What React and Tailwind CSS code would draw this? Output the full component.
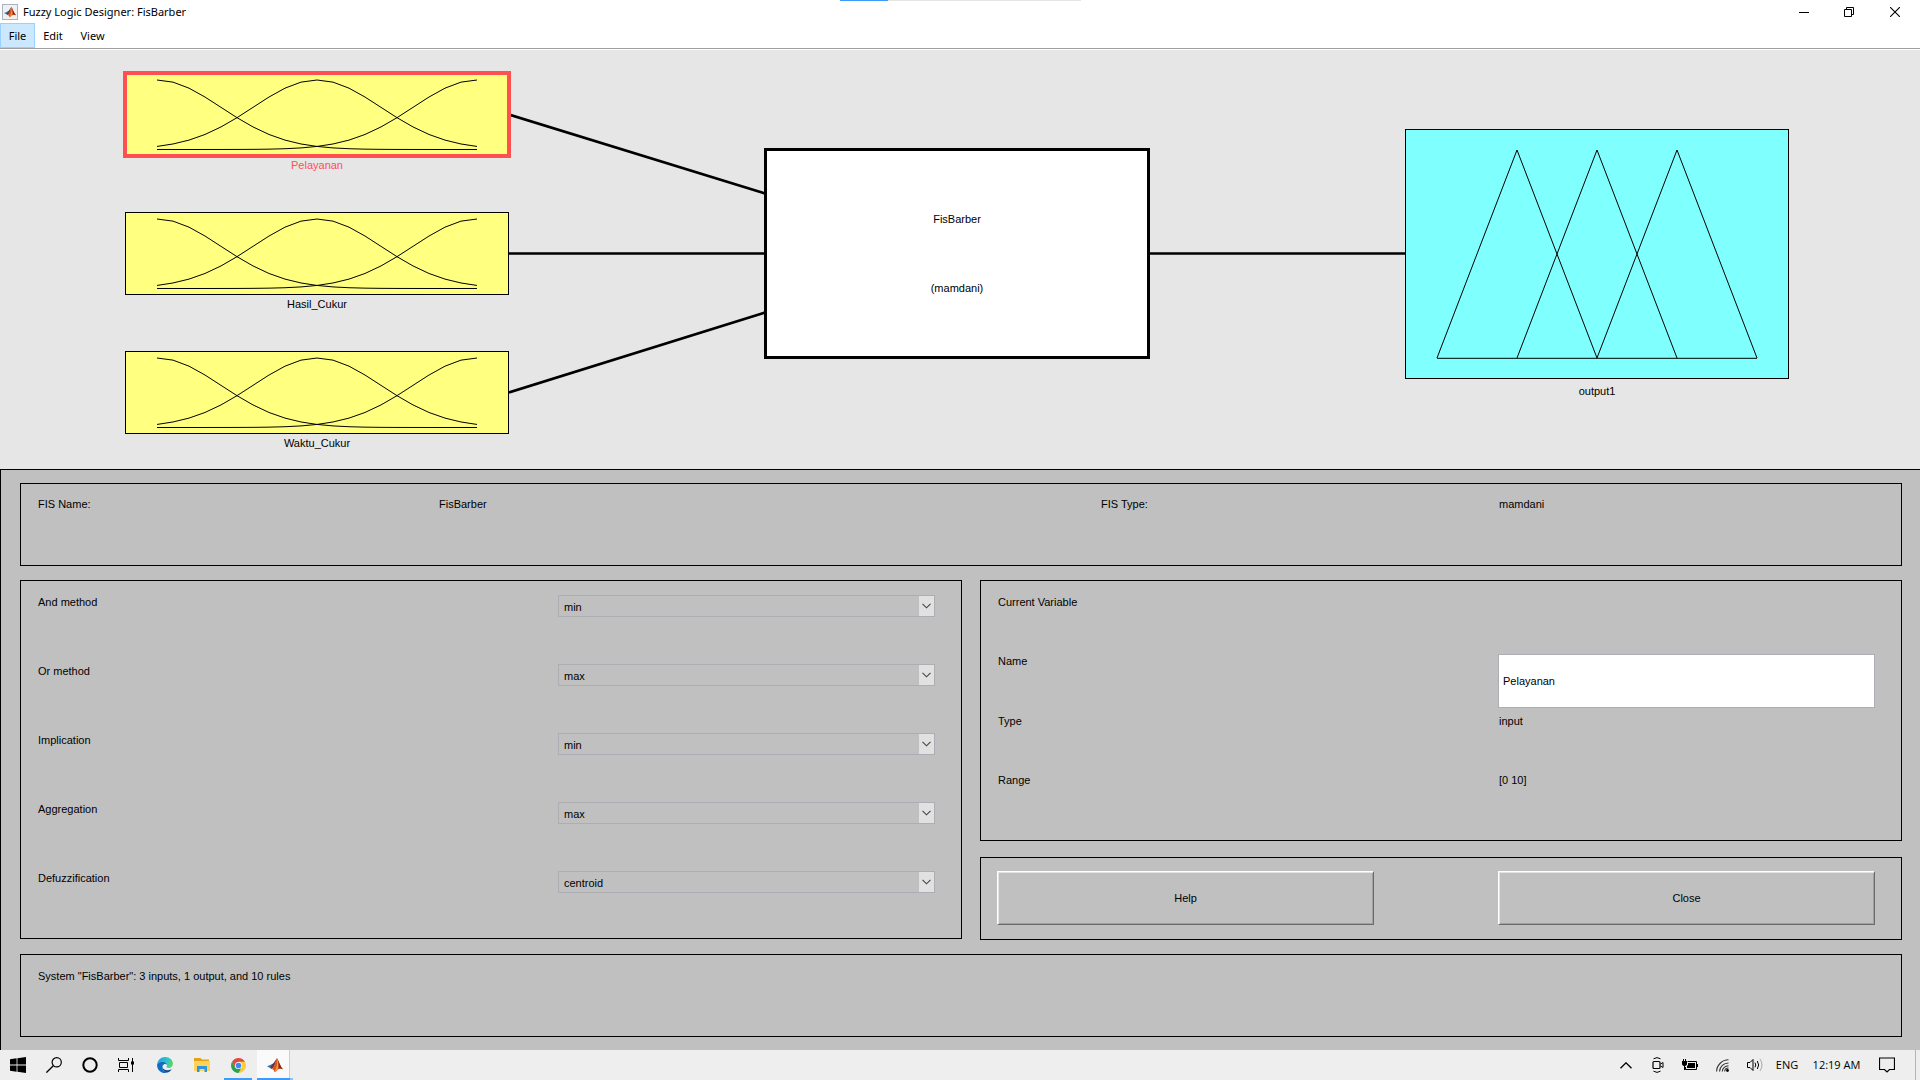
import React from "react";

const gauss = (c) =>
  Array.from({ length: 21 }, (_, i) => {
    const t = i / 20;
    const v = Math.exp(-((t - c) ** 2) / (2 * 0.2 * 0.2));
    return `${32 + t * 320},${76.5 - v * 69.5}`;
  }).join(" ");

const curves = [gauss(0), gauss(0.5), gauss(1)];

function InputNode({ name, selected }) {
  return (
    <div className="h-[139px]">
      <button
        type="button"
        aria-label={name}
        className={
          selected
            ? "relative z-10 block h-[83px] w-full bg-[#ffff80] outline-4 -outline-offset-2 outline-[#ff5050]"
            : "relative z-10 block h-[83px] w-full bg-[#ffff80] outline -outline-offset-1 outline-black"
        }
      >
        <svg viewBox="0 0 384 83" preserveAspectRatio="none" className="block h-full w-full">
          {curves.map((p) => (
            <polyline key={p} points={p} fill="none" stroke="#000" strokeWidth="1" />
          ))}
        </svg>
      </button>
      <div className={selected ? "mt-px text-center leading-4 text-[#ff5050]" : "mt-px text-center leading-4"}>
        {name}
      </div>
    </div>
  );
}

function Diagram() {
  return (
    <section className="grid h-[419px] grid-cols-[125fr_384fr_256fr_384fr_256fr_384fr_131fr] bg-[#e6e6e6] text-[11px]">
      <div />
      <div className="pt-[23px]">
        <InputNode name="Pelayanan" selected />
        <InputNode name="Hasil_Cukur" />
        <InputNode name="Waktu_Cukur" />
      </div>
      <svg viewBox="0 0 256 419" preserveAspectRatio="none" className="h-[419px] w-full">
        <path d="M0 64.5 256 143.5M0 203.5H256M0 342.5 256 262.5" fill="none" stroke="#000" strokeWidth="2.7" />
      </svg>
      <button
        type="button"
        className="-mx-px mt-[98px] flex h-[211px] flex-col items-center justify-center gap-[53px] border-3 border-black bg-white leading-4"
      >
        <span>FisBarber</span>
        <span>(mamdani)</span>
      </button>
      <svg viewBox="0 0 256 419" preserveAspectRatio="none" className="h-[419px] w-full">
        <path d="M0 203.5H256" stroke="#000" strokeWidth="2.7" />
      </svg>
      <div className="pt-[79px]">
        <button type="button" aria-label="output1" className="block h-[250px] w-full bg-[#80ffff] outline -outline-offset-1 outline-black">
          <svg viewBox="0 0 384 250" preserveAspectRatio="none" className="block h-full w-full">
            <path
              d="M32 229 112 21 192 229M112 229 192 21 272 229M192 229 272 21 352 229M32 229.3H352"
              fill="none"
              stroke="#000"
              strokeWidth="1"
            />
          </svg>
        </button>
        <div className="mt-1 text-center leading-4">output1</div>
      </div>
      <div />
    </section>
  );
}

const methods = [
  ["And method", "min"],
  ["Or method", "max"],
  ["Implication", "min"],
  ["Aggregation", "max"],
  ["Defuzzification", "centroid"],
];

function MethodRow({ label, value }) {
  const id = label.replace(" ", "-").toLowerCase();
  return (
    <div className="grid h-[69px] grid-cols-[520fr_377fr] items-start last:h-10">
      <label htmlFor={id} className="leading-4">
        {label}
      </label>
      <div className="relative mt-px">
        <select
          id={id}
          defaultValue={value}
          className="block h-[22px] w-full appearance-none border border-[#adadb3] bg-transparent pt-0.5 pl-[5px] text-black"
        >
          <option>{value}</option>
        </select>
        <span className="pointer-events-none absolute inset-y-px right-px flex w-[15px] items-center justify-center bg-[#e1e1e1] pr-px">
          <svg width="9" height="6" viewBox="0 0 9 6">
            <path d="M.5.8 4.5 4.8 8.5.8" fill="none" stroke="#444" strokeWidth="1.1" />
          </svg>
        </span>
      </div>
    </div>
  );
}

function BevelButton({ children }) {
  return (
    <button
      type="button"
      className="h-[54px] border border-t-white border-r-[#6b6b6b] border-b-[#6b6b6b] border-l-white bg-[#c0c0c0] text-center shadow-[inset_1px_1px_0_#e3e3e3,inset_-1px_-1px_0_#a0a0a0]"
    >
      {children}
    </button>
  );
}

function Controls() {
  return (
    <main className="flex flex-1 flex-col gap-3.5 border-t border-l border-black bg-[#c0c0c0] pt-[13px] pr-[18px] pb-[13px] pl-[19px] text-[11px]">
      <section className="grid h-[83px] grid-cols-[401fr_662fr_398fr_402fr] border border-black pt-3 pl-[17px] leading-4">
        <span>FIS Name:</span>
        <span>FisBarber</span>
        <span>FIS Type:</span>
        <span>mamdani</span>
      </section>
      <div className="grid flex-1 grid-cols-[942fr_922fr] gap-[18px]">
        <section className="mb-px border border-black pt-[13px] pr-[26px] pl-[17px]">
          {methods.map(([label, value]) => (
            <MethodRow key={label} label={label} value={value} />
          ))}
        </section>
        <div className="flex flex-col gap-4">
          <section className="flex-1 border border-black pt-[13px] pr-[26px] pl-[17px] leading-4">
            <h2>Current Variable</h2>
            <div className="mt-[43px] grid h-[60px] grid-cols-[500fr_377fr] items-start">
              <label htmlFor="var-name">Name</label>
              <input
                id="var-name"
                defaultValue="Pelayanan"
                className="mt-px h-[54px] w-full border border-[#adadb3] bg-white px-1 text-black"
              />
            </div>
            <div className="grid h-[59px] grid-cols-[500fr_377fr]">
              <span>Type</span>
              <span className="pl-px">input</span>
            </div>
            <div className="grid grid-cols-[500fr_377fr]">
              <span>Range</span>
              <span className="pl-px">[0 10]</span>
            </div>
          </section>
          <section className="grid h-[83px] grid-cols-2 gap-[124px] border border-black pt-[13px] pr-[26px] pl-4">
            <BevelButton>Help</BevelButton>
            <BevelButton>Close</BevelButton>
          </section>
        </div>
      </div>
      <section className="h-[83px] border border-black pt-[13px] pl-[17px] leading-4">
        System "FisBarber": 3 inputs, 1 output, and 10 rules
      </section>
    </main>
  );
}

function MatlabMark({ className }) {
  return (
    <svg viewBox="0 0 16 16" className={className}>
      <path d="M0 9.3 5 7.2 7.2 9 4.6 12z" fill="#3f74a8" />
      <path d="M5 7.2C7 6.6 8 3.4 10 1L7.4 9.2 4.6 12 3.8 10z" fill="#5b3a4c" />
      <path d="M4.6 12C7 11.4 8.4 5 10 1c1.6 2.8 3.2 8.2 6 11.4-2.3-1.2-3.6-1-5.3.3C9.6 13.6 8.8 15 7.5 15 7 13.3 6 12 4.6 12z" fill="#d9541e" />
      <path d="M10 1c.6 3.6.4 8-2.5 14 1.3 0 2.1-1.4 3.2-2.3C12 9.2 11.4 4 10 1z" fill="#f29a3c" />
      <path d="M10 1c1.6 2.8 3.2 8.2 6 11.4-2-1.1-3.2-1.1-4.4-.5C12 8 11.4 4 10 1z" fill="#8e2415" />
    </svg>
  );
}

function TitleBar() {
  return (
    <header className="relative bg-white">
      <div className="absolute top-0 left-[840px] flex h-px w-[241px] bg-[#e5e5e5]">
        <div className="w-12 bg-[#3f9bf7]" />
      </div>
      <div className="flex h-[23px] items-center">
        <span className="ml-0.5 flex h-4 w-4 items-center justify-center border border-[#a9b4c0] bg-[#eef0f2]">
          <MatlabMark className="h-3 w-3" />
        </span>
        <h1 className="ml-[5px] pt-px text-[11px]">Fuzzy Logic Designer: FisBarber</h1>
        <div className="ml-auto flex h-full">
          <button type="button" aria-label="Minimize" className="flex w-[45px] items-center justify-center">
            <svg width="10" height="10" viewBox="0 0 10 10">
              <path d="M0 5.5H10" stroke="#000" />
            </svg>
          </button>
          <button type="button" aria-label="Restore" className="flex w-[46px] items-center justify-center">
            <svg width="10" height="10" viewBox="0 0 10 10">
              <path d="M.5 2.5H7.5V9.5H.5zM2.5 2.5V.5H9.5V7.5H7.5" fill="none" stroke="#000" />
            </svg>
          </button>
          <button type="button" aria-label="Close window" className="mr-0.5 flex w-[46px] items-center justify-center">
            <svg width="10" height="10" viewBox="0 0 10 10">
              <path d="M0 0 10 10M10 0 0 10" stroke="#000" strokeWidth="1.1" />
            </svg>
          </button>
        </div>
      </div>
      <nav className="flex h-[25px] text-[11px]">
        <button type="button" className="w-[35px] border border-[#99d1ff] bg-[#cce8ff] pt-0.5">
          File
        </button>
        <button type="button" className="w-9 pt-0.5">
          Edit
        </button>
        <button type="button" className="w-[43px] pt-0.5">
          View
        </button>
      </nav>
      <div className="h-0.5 border-t border-[#a0a0a0]" />
    </header>
  );
}

const slot = "flex h-full items-center justify-center";

function Taskbar() {
  return (
    <footer className="flex h-[30px] items-center bg-[#eeeeee] text-[11px]">
      <button type="button" aria-label="Start" className={`${slot} w-9`}>
        <svg width="16" height="16" viewBox="0 0 16 16">
          <path d="M0 2.2 6.6 1.3V7.6H0zM7.4 1.2 16 0V7.6H7.4zM0 8.4H6.6V14.7L0 13.8zM7.4 8.4H16V16L7.4 14.8z" />
        </svg>
      </button>
      <button type="button" aria-label="Search" className={`${slot} w-9`}>
        <svg width="16" height="16" viewBox="0 0 16 16">
          <circle cx="10.7" cy="5.3" r="4.6" fill="none" stroke="#000" strokeWidth="1.2" />
          <path d="M7.3 8.7.4 15.6" stroke="#000" strokeWidth="1.3" />
        </svg>
      </button>
      <button type="button" aria-label="Cortana" className={`${slot} w-9`}>
        <svg width="16" height="16" viewBox="0 0 16 16">
          <circle cx="8" cy="8" r="6.7" fill="none" stroke="#000" strokeWidth="2" />
        </svg>
      </button>
      <button type="button" aria-label="Task View" className={`${slot} w-9`}>
        <svg width="16" height="16" viewBox="0 0 16 16" fill="none" stroke="#000">
          <path d="M.5 1V3.5H10.5V1M.5 15V12.5H10.5V15M1.5 5.5H9.5V10.5H1.5zM14.5 1V15" />
          <path d="M13 4.5H16V7.5H13z" fill="#000" stroke="none" />
        </svg>
      </button>
      <button type="button" aria-label="Microsoft Edge" className={`${slot} ml-[3px] w-9`}>
        <svg width="16" height="16" viewBox="0 0 16 16">
          <defs>
            <linearGradient id="edge-top" x1="0" x2="1" y1=".3" y2=".6">
              <stop offset="0" stopColor="#1f9fe0" />
              <stop offset=".6" stopColor="#2fc3c8" />
              <stop offset="1" stopColor="#63d957" />
            </linearGradient>
          </defs>
          <path d="M.1 7.5C.6 3 4 0 8 0c4.7 0 8 3.2 8 6.8 0 2.6-2 4.2-4.3 4.2-1.7 0-2.5-.8-2.2-1.4.5-.6.6-1.1.5-1.7C9.7 5.8 7.8 4.7 5.6 4.7 3.1 4.7.9 5.9.1 7.5z" fill="url(#edge-top)" />
          <path d="M.1 7.5C.9 5.9 3.1 4.7 5.6 4.7c2.2 0 4.1 1.1 4.4 3.2C9 6.5 6.7 6.7 5.7 8.6c-1.3 2.7.7 6.7 5 7-1 .3-1.8.4-2.7.4C3.5 16-.3 12.3.1 7.5z" fill="#0f6cc4" />
          <path d="M5.7 8.6C4.8 11.5 8 15 14.7 12.3c-.9 1.5-2.3 2.7-4 3.3-4.3-.3-6.3-4.3-5-7z" fill="#134a96" />
        </svg>
      </button>
      <button type="button" aria-label="File Explorer" className={`${slot} w-[37px]`}>
        <svg width="16" height="14" viewBox="0 0 16 14">
          <path d="M0 0H6.5L8 1.5H15V4H0z" fill="#e3a21a" />
          <path d="M0 3H16V13H0z" fill="#ffd35a" />
          <path d="M3 14V8H13V14H10.5V11H5.5V14z" fill="#3096dc" />
        </svg>
      </button>
      <button type="button" aria-label="Google Chrome" className={`${slot} relative w-9`}>
        <svg width="15" height="15" viewBox="0 0 16 16">
          <path d="M8 4H14.9A8 8 0 0 1 8 16L11.5 10z" fill="#fbcd3c" />
          <path d="M1.1 4A8 8 0 0 1 14.9 4H8L4.5 10z" fill="#e04a3a" />
          <path d="M1.1 4 4.5 10H11.5L8 16A8 8 0 0 1 1.1 4z" fill="#2ba24c" />
          <circle cx="8" cy="8" r="3.8" fill="#fff" />
          <circle cx="8" cy="8" r="3" fill="#4285f4" />
        </svg>
        <span className="absolute bottom-0 left-1 h-0.5 w-7 bg-[#3f9bf7]" />
      </button>
      <button type="button" aria-label="MATLAB" className={`${slot} relative ml-px w-9 bg-[#fafafa]`}>
        <MatlabMark className="h-4 w-4" />
        <span className="absolute inset-y-0 right-0 w-1 border-l border-[#d0d0d0] bg-[#eeeeee]" />
        <span className="absolute inset-x-0 bottom-0 h-0.5 border-r-3 border-[#8cc2f8] bg-[#3f9bf7]" />
      </button>

      <div className="ml-auto flex h-full items-center">
        <button type="button" aria-label="Show hidden icons" className={`${slot} w-[31px]`}>
          <svg width="12" height="7" viewBox="0 0 12 7">
            <path d="M.5 6.3 6 .8 11.5 6.3" fill="none" stroke="#000" strokeWidth="1.3" />
          </svg>
        </button>
        <button type="button" aria-label="Meet Now" className={`${slot} w-[33px]`}>
          <svg width="12" height="16" viewBox="0 0 12 16" fill="none" stroke="#000">
            <rect x="1" y="4.5" width="7" height="7" rx="1" strokeWidth="1.2" />
            <path d="M8.5 7 11 5.5V10.5L8.5 9M1.5 1.8Q5-.6 8.5 1.8M1.5 14.2Q5 16.6 8.5 14.2" />
          </svg>
        </button>
        <button type="button" aria-label="Battery" className={`${slot} w-8`}>
          <svg width="16" height="12" viewBox="0 0 16 12">
            <path d="M5.5 2.5H14.5V10.5H3.5V8M15.5 5V8" fill="none" stroke="#000" />
            <path d="M6 4H13V9H5V7L6 6z" />
            <path d="M0 2H5V5.5L3.5 7H1.5L0 5.5zM1 0H2V2H1zM3 0H4V2H3zM2 7H3V10.5H4V11H2z" />
          </svg>
        </button>
        <button type="button" aria-label="Network" className={`${slot} w-[33px]`}>
          <svg width="13" height="13" viewBox="0 0 13 13" fill="none" stroke="#333">
            <path d="M.6 12.5A12 12 0 0 1 12.5.8M3.5 12.5A9 9 0 0 1 12.5 4M6.2 12.5A6.3 6.3 0 0 1 12.5 6.7M8.6 12.5A4 4 0 0 1 12.5 9" strokeWidth="1.1" />
            <circle cx="11.5" cy="11.5" r="1.4" fill="#000" stroke="none" />
          </svg>
        </button>
        <button type="button" aria-label="Volume" className={`${slot} w-[31px]`}>
          <svg width="16" height="14" viewBox="0 0 16 14" fill="none" stroke="#000">
            <path d="M.5 4.5H3L6 1.5V12.5L3 9.5H.5z" />
            <path d="M8 4.7Q9.5 7 8 9.3M10.3 3Q13 7 10.3 11" />
            <path d="M13 1Q17 7 13 13" stroke="#aaa" />
          </svg>
        </button>
        <button type="button" className={`${slot} w-[34px]`}>ENG</button>
        <button type="button" className={`${slot} w-[65px]`}>12:19 AM</button>
        <button type="button" aria-label="Notifications" className={`${slot} w-9`}>
          <svg width="16" height="16" viewBox="0 0 16 16">
            <path d="M.5 1H15.5V12.5H10.5L8 15 5.5 12.5H.5z" fill="none" stroke="#000" strokeWidth="1.2" />
          </svg>
        </button>
        <button type="button" aria-label="Show desktop" className="ml-2.5 h-full w-[5px] border-l border-[#b5b5b5]" />
      </div>
    </footer>
  );
}

export default function App() {
  return (
    <div className="flex min-h-screen flex-col font-['Liberation_Sans',Arial,sans-serif] text-black">
      <div className="font-['Noto_Sans',sans-serif]">
        <TitleBar />
      </div>
      <Diagram />
      <Controls />
      <div className="font-['Open_Sans','Noto_Sans',sans-serif]">
        <Taskbar />
      </div>
    </div>
  );
}
